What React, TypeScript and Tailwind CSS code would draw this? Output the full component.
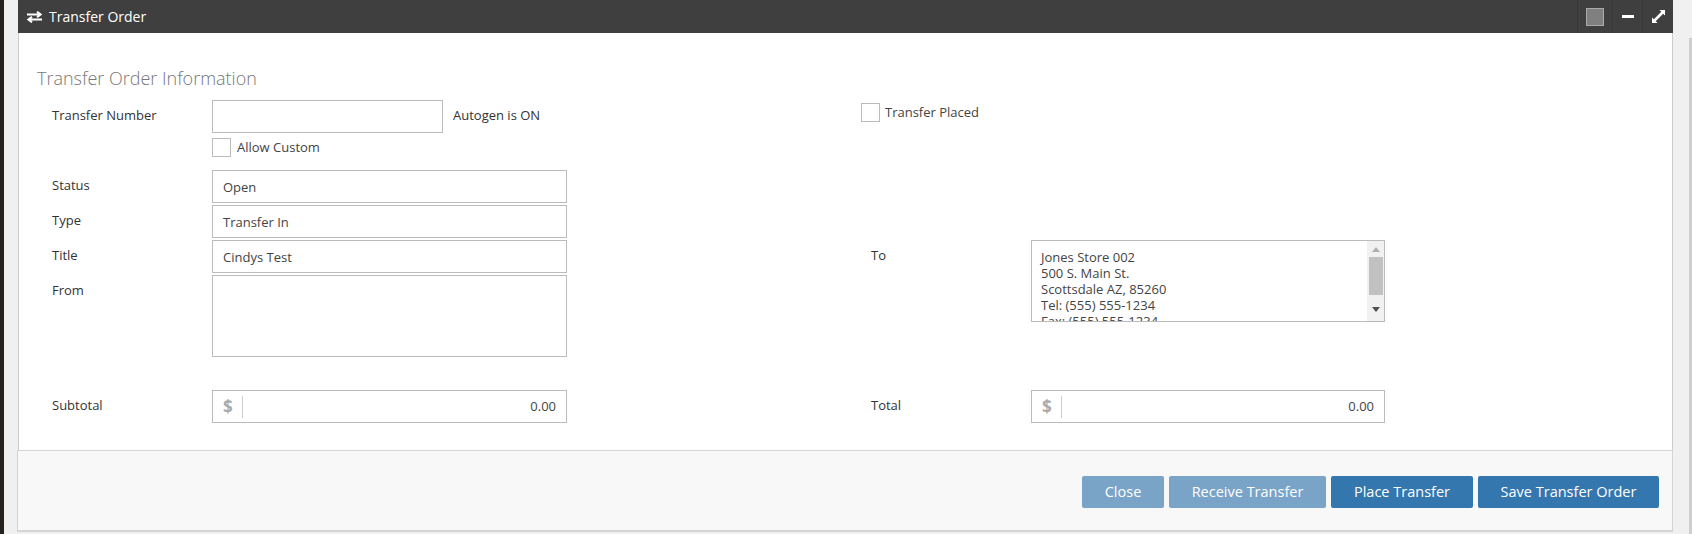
import React from "react";

const labelCls = "w-[193px] shrink-0 pl-[33px] pt-[6px] text-[13px] leading-[18px] text-[#333]";
const rightLabelCls = "w-[170px] shrink-0 pl-[10px] pt-[6px] text-[13px] leading-[18px] text-[#333]";
const inputCls = "h-[33px] w-[355px] border border-[#bbb] bg-white px-[10px] pt-[7px] text-[13px] leading-[18px] text-[#444]";

function MoneyInput({ w }: { w: string }) {
  return (
    <div className={w + " flex h-[33px] items-center border border-[#bbb] pr-[10px]"}>
      <span className="w-[29px] pl-[10px] text-[17px] font-bold text-[#aaa]">$</span>
      <span className="h-[22px] w-px bg-[#ccc]" />
      <span className="flex-1 pt-[1px] text-right text-[13px] text-[#444]">0.00</span>
    </div>
  );
}

function Btn({ text, w, light }: { text: string; w: string; light?: boolean }) {
  return (
    <button className={w + " h-[32px] rounded-[2px] text-[14.5px] text-white " + (light ? "bg-[#7aa3c8]" : "bg-[#3476ae]")}>{text}</button>
  );
}

export default function App() {
  return (
    <div className="flex h-[534px] w-[1692px] overflow-hidden bg-[#f0f0f0] font-['Open_Sans',sans-serif]">
      <div className="h-full w-[4px] shrink-0 bg-[#252220]" />
      <div className="ml-[14px] flex h-[532px] w-[1655px] flex-col">
        <div className="flex h-[33px] shrink-0 items-center bg-[#3f3f3f] text-white">
          <svg className="ml-[9px]" width="15" height="12" viewBox="0 0 15 12" fill="none" stroke="white" strokeWidth="2">
            <path d="M0 3.5H13M10 0.7L13.6 3.5L10 6.3" />
            <path d="M15 8.5H2M5 5.7L1.4 8.5L5 11.3" />
          </svg>
          <span className="ml-[7px] text-[14px] leading-[20px]">Transfer Order</span>
          <div className="ml-auto flex h-full">
            <div className="flex w-[35px] items-center justify-center border-l border-[#383838]">
              <div className="h-[18px] w-[18px] border border-[#aaa] bg-[#808080]" />
            </div>
            <div className="flex w-[30px] items-center justify-center border-l border-[#383838]">
              <div className="h-[3px] w-[12px] bg-white" />
            </div>
            <div className="flex w-[31px] items-center justify-center border-l border-[#383838]">
              <svg width="13" height="13" viewBox="0 0 14 14" fill="white">
                <path d="M8 0H14V6L12 4L4 12L6 14H0V8L2 10L10 2Z" />
              </svg>
            </div>
          </div>
        </div>

        <div className="flex h-[417px] shrink-0 border-x border-[#ccc] bg-white">
          <div className="w-[842px] shrink-0">
            <h2 className="mt-[33px] pl-[18px] text-[18px] font-light leading-[24px] text-[#777]">Transfer Order Information</h2>
            <div className="mt-[10px] flex h-[33px] items-start">
              <div className={labelCls}>Transfer Number</div>
              <div className="h-[33px] w-[231px] border border-[#bbb]" />
              <div className="ml-[10px] pt-[6px] text-[13px] leading-[18px] text-[#333]">Autogen is ON</div>
            </div>
            <div className="ml-[193px] mt-[5px] flex h-[19px] items-center">
              <div className="h-[19px] w-[19px] border border-[#bbb]" />
              <span className="ml-[6px] text-[13px] text-[#444]">Allow Custom</span>
            </div>
            <div className="mt-[13px] flex flex-col gap-[2px]">
              {[["Status", "Open"], ["Type", "Transfer In"], ["Title", "Cindys Test"]].map(([l, v]) => (
                <div key={l} className="flex h-[33px] items-start">
                  <div className={labelCls}>{l}</div>
                  <div className={inputCls}>{v}</div>
                </div>
              ))}
              <div className="flex h-[82px] items-start">
                <div className={labelCls}>From</div>
                <div className="h-[82px] w-[355px] border border-[#bbb]" />
              </div>
            </div>
            <div className="mt-[33px] flex h-[33px] items-start">
              <div className={labelCls}>Subtotal</div>
              <MoneyInput w="w-[355px]" />
            </div>
          </div>

          <div className="flex-1">
            <div className="mt-[70px] flex h-[19px] items-center">
              <div className="h-[19px] w-[19px] border border-[#bbb]" />
              <span className="ml-[5px] text-[13px] text-[#444]">Transfer Placed</span>
            </div>
            <div className="mt-[118px] flex h-[82px] items-start">
              <div className={rightLabelCls}>To</div>
              <div className="flex h-[82px] w-[354px] overflow-hidden border border-[#bbb]">
                <div className="flex-1 pl-[9px] pt-[8px] text-[13px] leading-[16px] text-[#444]">
                  <div>Jones Store 002</div>
                  <div>500 S. Main St.</div>
                  <div>Scottsdale AZ, 85260</div>
                  <div>Tel: (555) 555-1234</div>
                  <div>Fax: (555) 555-1234</div>
                </div>
                <div className="flex h-full w-[17px] flex-col items-center bg-[#f1f1f1]">
                  <svg className="mt-[6px]" width="8" height="5" viewBox="0 0 8 5" fill="#b0b0b0"><path d="M4 0L8 5H0Z" /></svg>
                  <div className="mt-[5px] h-[38px] w-[14px] bg-[#c1c1c1]" />
                  <svg className="mt-[12px]" width="8" height="5" viewBox="0 0 8 5" fill="#505050"><path d="M0 0H8L4 5Z" /></svg>
                </div>
              </div>
            </div>
            <div className="mt-[68px] flex h-[33px] items-start">
              <div className={rightLabelCls}>Total</div>
              <MoneyInput w="w-[354px]" />
            </div>
          </div>
        </div>

        <div className="-ml-px flex h-[82px] shrink-0 items-start justify-end gap-[5px] border border-b-2 border-[#d4d4d4] bg-[#f8f8f8] pr-[13px] pt-[25px]">
          <Btn text="Close" w="w-[82px]" light />
          <Btn text="Receive Transfer" w="w-[157px]" light />
          <Btn text="Place Transfer" w="w-[142px]" />
          <Btn text="Save Transfer Order" w="w-[181px]" />
        </div>
      </div>
      <div className="ml-auto mt-[38px] h-full w-[3px] bg-[#cfcfcf]" />
    </div>
  );
}
